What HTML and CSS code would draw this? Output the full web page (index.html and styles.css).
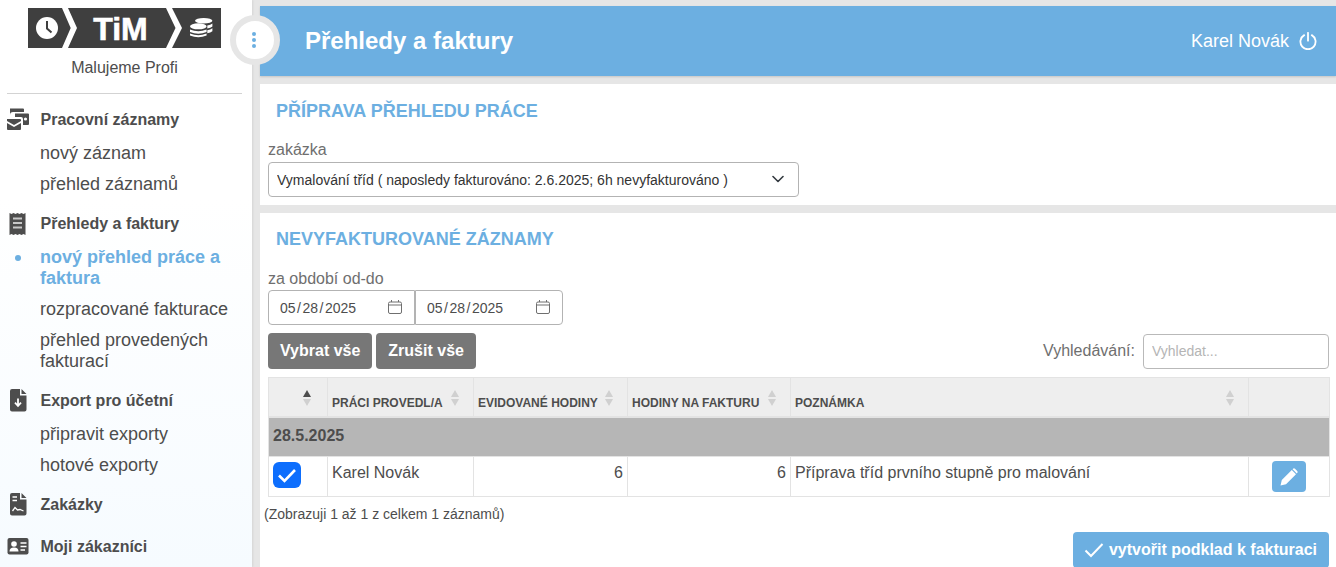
FILE: index.html
```html
<!DOCTYPE html>
<html lang="cs">
<head>
<meta charset="utf-8">
<title>Přehledy a faktury</title>
<link rel="stylesheet" href="styles.css">
</head>
<body>
<div class="app">
  <aside class="sidebar">
    <div class="brand">
      <svg class="logo" viewBox="0 0 193 40" width="193" height="40" aria-hidden="true">
        <rect width="193" height="40" fill="#3f3f3f"/>
        <path d="M34 0 L42.700 20 L34 40 L40 40 L49 20 L40 0Z" fill="#fff"/>
        <path d="M138 0 L147.500 20 L138 40 L144 40 L154 20 L144 0Z" fill="#fff"/>
        <circle cx="19" cy="20" r="11" fill="#fff"/>
        <path d="M19 13 V20.500 L23.500 24.500" fill="none" stroke="#3f3f3f" stroke-width="2"/>
        <text x="92.500" y="32" class="logo-text">TiM</text>
        <g fill="#fff">
          <ellipse cx="175.700" cy="12.700" rx="8.700" ry="2.800"/>
          <ellipse cx="170.300" cy="18.300" rx="8.300" ry="3"/>
          <path d="M162 21.500 Q170.300 25 178.600 21.500 V24 Q170.300 27.500 162 24Z"/>
          <path d="M162 25.500 Q170.300 29 178.600 25.500 V27.500 Q170.300 31 162 27.500Z"/>
          <path d="M179.300 17.500 Q182.500 17 184.400 15.500 V18.500 Q182.500 20 179.300 20.500Z"/>
          <path d="M179.300 22.300 Q182.500 22 184.400 20.300 V23.300 Q182.500 25 179.300 25.300Z"/>
        </g>
      </svg>
      <div class="company">Malujeme Profi</div>
    </div>
    <nav class="menu">
      <section class="group g-work">
        <h3 class="group-title">
          <svg class="gi" viewBox="0 0 24 24" aria-hidden="true"><path d="M3 0.500 H16 Q17 0.500 17 1.500 V4 H6 Q3 4 3 7Z" fill="#4d4d4d"/><path d="M8 5.500 H21 Q22 5.500 22 6.500 V16 Q22 17 21 17 H16 V11 Q16 9 14 9 H8Z" fill="#4d4d4d"/><path d="M0 11 H13 Q14 11 14 12 V13 L7 17 L0 13Z M0 15 L7 19 L14 15 V21 Q14 22 13 22 H1 Q0 22 0 21Z" fill="#4d4d4d"/><circle cx="18.500" cy="11" r="1.600" fill="#fff"/></svg>
          <span>Pracovní záznamy</span>
        </h3>
        <a class="item">nový záznam</a>
        <a class="item">přehled záznamů</a>
      </section>
      <section class="group">
        <h3 class="group-title">
          <svg class="gi" viewBox="0 0 24 24" aria-hidden="true"><path d="M2.500 1 L4.500 2 L6.500 1 L8.500 2 L10.500 1 L12.500 2 L14.500 1 L16.500 2 L18.500 1 V23 L16.500 22 L14.500 23 L12.500 22 L10.500 23 L8.500 22 L6.500 23 L4.500 22 L2.500 23Z" fill="#4d4d4d"/><path d="M6 6.500 H15 M6 11 H15 M6 15.500 H15" stroke="#c8c8c8" stroke-width="2"/></svg>
          <span>Přehledy a faktury</span>
        </h3>
        <a class="item active">nový přehled práce a faktura</a>
        <a class="item">rozpracované fakturace</a>
        <a class="item">přehled provedených fakturací</a>
      </section>
      <section class="group">
        <h3 class="group-title">
          <svg class="gi" viewBox="0 0 24 24" aria-hidden="true"><path d="M5 0 H13 V6.500 H19.500 V20.500 Q19.500 22.500 17.500 22.500 H5 Q3 22.500 3 20.500 V2 Q3 0 5 0Z M14.500 0 L19.500 5 H14.500Z" fill="#4d4d4d"/><path d="M11 9.500 V16.500 M8 13.700 L11 17 L14 13.700" stroke="#fff" stroke-width="1.800" fill="none"/></svg>
          <span>Export pro účetní</span>
        </h3>
        <a class="item">připravit exporty</a>
        <a class="item">hotové exporty</a>
      </section>
      <section class="group">
        <h3 class="group-title">
          <svg class="gi" viewBox="0 0 24 24" aria-hidden="true"><path d="M5 0 H13 V6.500 H19.500 V20.500 Q19.500 22.500 17.500 22.500 H5 Q3 22.500 3 20.500 V2 Q3 0 5 0Z M14.500 0 L19.500 5 H14.500Z" fill="#4d4d4d"/><path d="M5.500 4 H10 M5.500 7.500 H10" stroke="#fff" stroke-width="1.500"/><path d="M5.500 18 L8 14.500 L10.500 17 L13 16.500 L16.500 18" stroke="#fff" stroke-width="1.300" fill="none"/></svg>
          <span>Zakázky</span>
        </h3>
      </section>
      <section class="group">
        <h3 class="group-title">
          <svg class="gi" viewBox="0 0 24 24" aria-hidden="true"><rect x="0.500" y="3" width="21" height="16.500" rx="2" fill="#4d4d4d"/><circle cx="7" cy="9" r="2.800" fill="#fff"/><path d="M2.500 16.500 Q2.500 12.500 7 12.500 Q11.500 12.500 11.500 16.500Z" fill="#fff"/><path d="M13.500 8 H19.500 M13.500 11.500 H19.500 M13.500 15 H18" stroke="#fff" stroke-width="1.400"/></svg>
          <span>Moji zákazníci</span>
        </h3>
      </section>
    </nav>
  </aside>

  <main class="main">
    <button class="knob" type="button" aria-label="menu"><span></span><span></span><span></span></button>
    <header class="topbar">
      <h1>Přehledy a faktury</h1>
      <div class="user">
        <span>Karel Novák</span>
        <svg viewBox="0.500 0.300 19 19" width="18" height="18" aria-hidden="true"><path d="M6 3.600 A8 8 0 1 0 14 3.600" fill="none" stroke="#fff" stroke-width="1.900" stroke-linecap="round"/><path d="M10 1.200 V9.500" stroke="#fff" stroke-width="1.900" stroke-linecap="round"/></svg>
      </div>
    </header>

    <section class="card card-top">
      <h2>PŘÍPRAVA PŘEHLEDU PRÁCE</h2>
      <label class="lbl" for="zak">zakázka</label>
      <div class="select-wrap">
        <select id="zak" class="select"><option>Vymalování tříd ( naposledy fakturováno: 2.6.2025; 6h nevyfakturováno )</option></select>
        <svg class="chev" viewBox="0 0 12 8" width="12" height="8" aria-hidden="true"><path d="M1 1.500 L6 6.500 L11 1.500" fill="none" stroke="#343a40" stroke-width="1.600" stroke-linecap="round" stroke-linejoin="round"/></svg>
      </div>
    </section>

    <section class="card card-list">
      <h2>NEVYFAKTUROVANÉ ZÁZNAMY</h2>
      <div class="lbl lbl-2">za období od-do</div>
      <div class="dates">
        <div class="date-wrap">
          <input class="date" type="text" value="05 / 28 / 2025" aria-label="od">
          <svg class="cal" viewBox="0 0 14 14" width="14" height="14" aria-hidden="true"><path d="M0.500 3.500 Q0.500 2 2 2 H12 Q13.500 2 13.500 3.500 V12 Q13.500 13.500 12 13.500 H2 Q0.500 13.500 0.500 12Z M0.500 5 H13.500 M3.500 0 V2 M10.500 0 V2" fill="none" stroke="#6f6f6f" stroke-width="1"/></svg>
        </div>
        <div class="date-wrap date-wrap-2">
          <input class="date date-2" type="text" value="05 / 28 / 2025" aria-label="do">
          <svg class="cal" viewBox="0 0 14 14" width="14" height="14" aria-hidden="true"><path d="M0.500 3.500 Q0.500 2 2 2 H12 Q13.500 2 13.500 3.500 V12 Q13.500 13.500 12 13.500 H2 Q0.500 13.500 0.500 12Z M0.500 5 H13.500 M3.500 0 V2 M10.500 0 V2" fill="none" stroke="#6f6f6f" stroke-width="1"/></svg>
        </div>
      </div>
      <div class="toolbar">
        <button class="btn" type="button">Vybrat vše</button>
        <button class="btn" type="button">Zrušit vše</button>
        <label class="search">Vyhledávání:<input type="text" placeholder="Vyhledat..."></label>
      </div>
      <table class="grid">
        <colgroup><col class="c1"><col class="c2"><col class="c3"><col class="c4"><col class="c5"><col class="c6"></colgroup>
        <thead>
          <tr>
            <th class="sorted"><i class="sort up"></i></th>
            <th>PRÁCI PROVEDL/A<i class="sort"></i></th>
            <th>EVIDOVANÉ HODINY<i class="sort"></i></th>
            <th>HODINY NA FAKTURU<i class="sort"></i></th>
            <th>POZNÁMKA<i class="sort"></i></th>
            <th></th>
          </tr>
        </thead>
        <tbody>
          <tr class="day"><td colspan="6">28.5.2025</td></tr>
          <tr class="row">
            <td><span class="check"><svg viewBox="0 0 28 26" width="28" height="26" aria-hidden="true"><path d="M6 13.500 L11.500 19 L22 8" fill="none" stroke="#fff" stroke-width="2.600"/></svg></span></td>
            <td>Karel Novák</td>
            <td class="num">6</td>
            <td class="num">6</td>
            <td>Příprava tříd prvního stupně pro malování</td>
            <td class="act"><button class="edit" type="button" aria-label="upravit"><svg viewBox="0 0 20 20" width="20" height="20" aria-hidden="true"><path d="M1.500 18.500 L2.800 13 L12.800 3 L17 7.200 L7 17.200Z M14 1.800 Q15 0.800 16 1.800 L18.200 4 Q19.200 5 18.200 6 L17.800 6.400 L13.600 2.200Z" fill="#fff"/></svg></button></td>
          </tr>
        </tbody>
      </table>
      <div class="info">(Zobrazuji 1 až 1 z celkem 1 záznamů)</div>
      <div class="actions">
        <button class="submit" type="button"><svg viewBox="0 0 20 16" width="20" height="16" aria-hidden="true"><path d="M1.500 8.500 L7 14 L18.500 2" fill="none" stroke="#fff" stroke-width="2"/></svg>vytvořit podklad k fakturaci</button>
      </div>
    </section>
  </main>
</div>
</body>
</html>
```
FILE: styles.css
```css
* { box-sizing: border-box; }
html, body { margin: 0; height: 567px; overflow: hidden; }
body { font-family: "Liberation Sans", Arial, sans-serif; color: #4d4d4d; background: #e6e6e6; }
.app { display: flex; height: 567px; }

.sidebar { width: 252px; flex: none; height: 567px; overflow: hidden; background: linear-gradient(180deg, #fff 35%, #f6fbff 100%); box-shadow: 1px 0 2px rgba(0,0,0,.08); }
.brand { padding: 8px 10px 0 7px; }
.logo { display: block; margin: 0 0 0 21px; }
.logo-text { font: 700 32px "Liberation Sans", Arial, sans-serif; fill: #fff; stroke: #fff; stroke-width: .6px; text-anchor: middle; }
.company { margin-top: 10px; padding-bottom: 15px; width: 235px; text-align: center; font-size: 16px; line-height: 20px; border-bottom: 1px solid #d3d3d3; }
.menu { padding-top: 11px; }
.group { padding-bottom: 9px; }
.group-title { display: flex; align-items: center; margin: 0 0 3px; height: 30px; padding-left: 7px; font-size: 16px; font-weight: 700; color: #4d4d4d; }
.gi { width: 24px; height: 24px; flex: none; margin-right: 9.500px; }
.item { position: relative; display: block; padding: 5px 20px 5px 40px; font-size: 18px; line-height: 21px; color: #4d4d4d; }
.item.active { color: #6cafe1; font-weight: 700; }
.item.active::before { content: ""; position: absolute; left: 15px; top: 13px; width: 6px; height: 6px; border-radius: 50%; background: #6cafe1; }

.main { position: relative; flex: 1; min-width: 0; padding: 6px 0 0 8px; display: flex; flex-direction: column; }
.knob { position: absolute; left: -22px; top: 15px; width: 50px; height: 50px; padding: 0 2px 0 0; border: 6px solid #e6e6e6; border-radius: 50%; background: #fff; display: flex; flex-direction: column; align-items: center; justify-content: center; gap: 2px; z-index: 2; }
.knob span { width: 4px; height: 4px; border-radius: 50%; background: #6cafe1; }
.topbar { height: 70px; flex: none; background: #6cafe1; color: #fff; display: flex; align-items: center; justify-content: space-between; padding: 0 19px 0 45px; box-shadow: 0 1px 2px rgba(0,0,0,.15); }
.topbar h1 { margin: 0; font-size: 24px; font-weight: 700; }
.user { display: flex; align-items: center; gap: 10px; font-size: 18px; }
.user svg { display: block; }

.card { background: #fff; padding: 0 7px 0 8px; }
.card-top { margin-top: 8px; height: 121px; flex: none; }
.card-list { margin-top: 8px; flex: 1; min-height: 0; overflow: hidden; }
.card h2 { margin: 0; padding: 17px 0 0 8px; font-size: 18px; line-height: 20px; font-weight: 700; color: #6cafe1; }
.card-list h2 { padding-top: 16px; }
.lbl { display: block; font-size: 16px; line-height: 20px; color: #6f6f6f; }
.card-top .lbl { margin-top: 19px; }
.select-wrap { position: relative; width: 531px; margin-top: 2px; }
.select { appearance: none; display: block; width: 100%; height: 35px; padding: 0 8px; border: 1px solid #b3b3b3; border-radius: 4px; background: #fff; color: #333; font: 14px "Liberation Sans", Arial, sans-serif; }
.chev { position: absolute; right: 15px; top: 13px; pointer-events: none; }

.card .lbl-2 { margin-top: 20px; }
.dates { display: flex; margin-top: 1px; }
.date-wrap { position: relative; width: 147px; }
.date-wrap-2 { width: 148px; }
.date { display: block; width: 100%; height: 35px; padding: 0 11px; border: 1px solid #b3b3b3; border-radius: 4px 0 0 4px; background: #fff; color: #4d4d4d; font: 14px "Liberation Sans", Arial, sans-serif; word-spacing: -2.400px; }
.date-2 { border-radius: 0 4px 4px 0; }
.cal { position: absolute; right: 13px; top: 10px; pointer-events: none; }
.toolbar { display: flex; align-items: center; margin-top: 8px; gap: 4px; }
.btn { height: 36px; padding: 0 12px; border: 0; border-radius: 4px; background: #777; color: #fff; font: 700 16px "Liberation Sans", Arial, sans-serif; }
.search { margin-left: auto; display: flex; align-items: center; gap: 8px; font-size: 16px; color: #6f6f6f; }
.search input { width: 186px; height: 35px; padding: 0 8px; border: 1px solid #b9b9b9; border-radius: 4px; font: 14px "Liberation Sans", Arial, sans-serif; }
.search input::placeholder { color: #b5b5b5; }

.grid { width: 1061px; margin-top: 8px; border-collapse: collapse; table-layout: fixed; }
.c1 { width: 59px; } .c2 { width: 146px; } .c3 { width: 154px; } .c4 { width: 163px; } .c5 { width: 458px; } .c6 { width: 81px; }
.grid th { position: relative; height: 39px; padding: 0 4px 6px; background: #eee; border: 1px solid #e3e3e3; border-bottom-width: 2px; font-size: 12px; line-height: 14px; text-align: left; vertical-align: bottom; color: #4d4d4d; }
.sort { position: absolute; right: 14px; top: 12px; width: 0; height: 0; border-left: 4px solid transparent; border-right: 4px solid transparent; border-bottom: 7px solid #d0d0d0; }
.sort::after { content: ""; position: absolute; left: -4px; top: 9px; width: 0; height: 0; border-left: 4px solid transparent; border-right: 4px solid transparent; border-top: 7px solid #d0d0d0; }
.sort.up { border-bottom-color: #4d4d4d; right: 16px; }
.day td { height: 40px; padding: 0 4px 2px; background: #b6b6b6; font-weight: 700; font-size: 16px; color: #4d4d4d; border: 1px solid #e3e3e3; }
.row td { height: 40px; padding: 0 4px 7px; font-size: 16px; border: 1px solid #e3e3e3; vertical-align: middle; color: #4d4d4d; }
.row td.num { text-align: right; }
.row td.act { padding: 0; text-align: center; }
.row td:first-child { padding: 0 0 4px 4px; }
.check { display: block; width: 28px; height: 26px; border-radius: 6px; background: #0d6efd; }
.check svg, .edit svg { display: block; }
.edit { display: inline-flex; align-items: center; justify-content: center; width: 34px; height: 31px; padding: 0; border: 0; border-radius: 4px; background: #6cafe1; vertical-align: middle; }
.info { margin: 9px 0 0 -4px; font-size: 14px; line-height: 17px; color: #4d4d4d; }
.actions { display: flex; justify-content: flex-end; margin-top: 9px; }
.submit { display: flex; align-items: center; gap: 5px; height: 36px; padding: 0 12px 0 11px; border: 0; border-radius: 4px; background: #6cafe1; color: #fff; font: 700 16px "Liberation Sans", Arial, sans-serif; }
```
